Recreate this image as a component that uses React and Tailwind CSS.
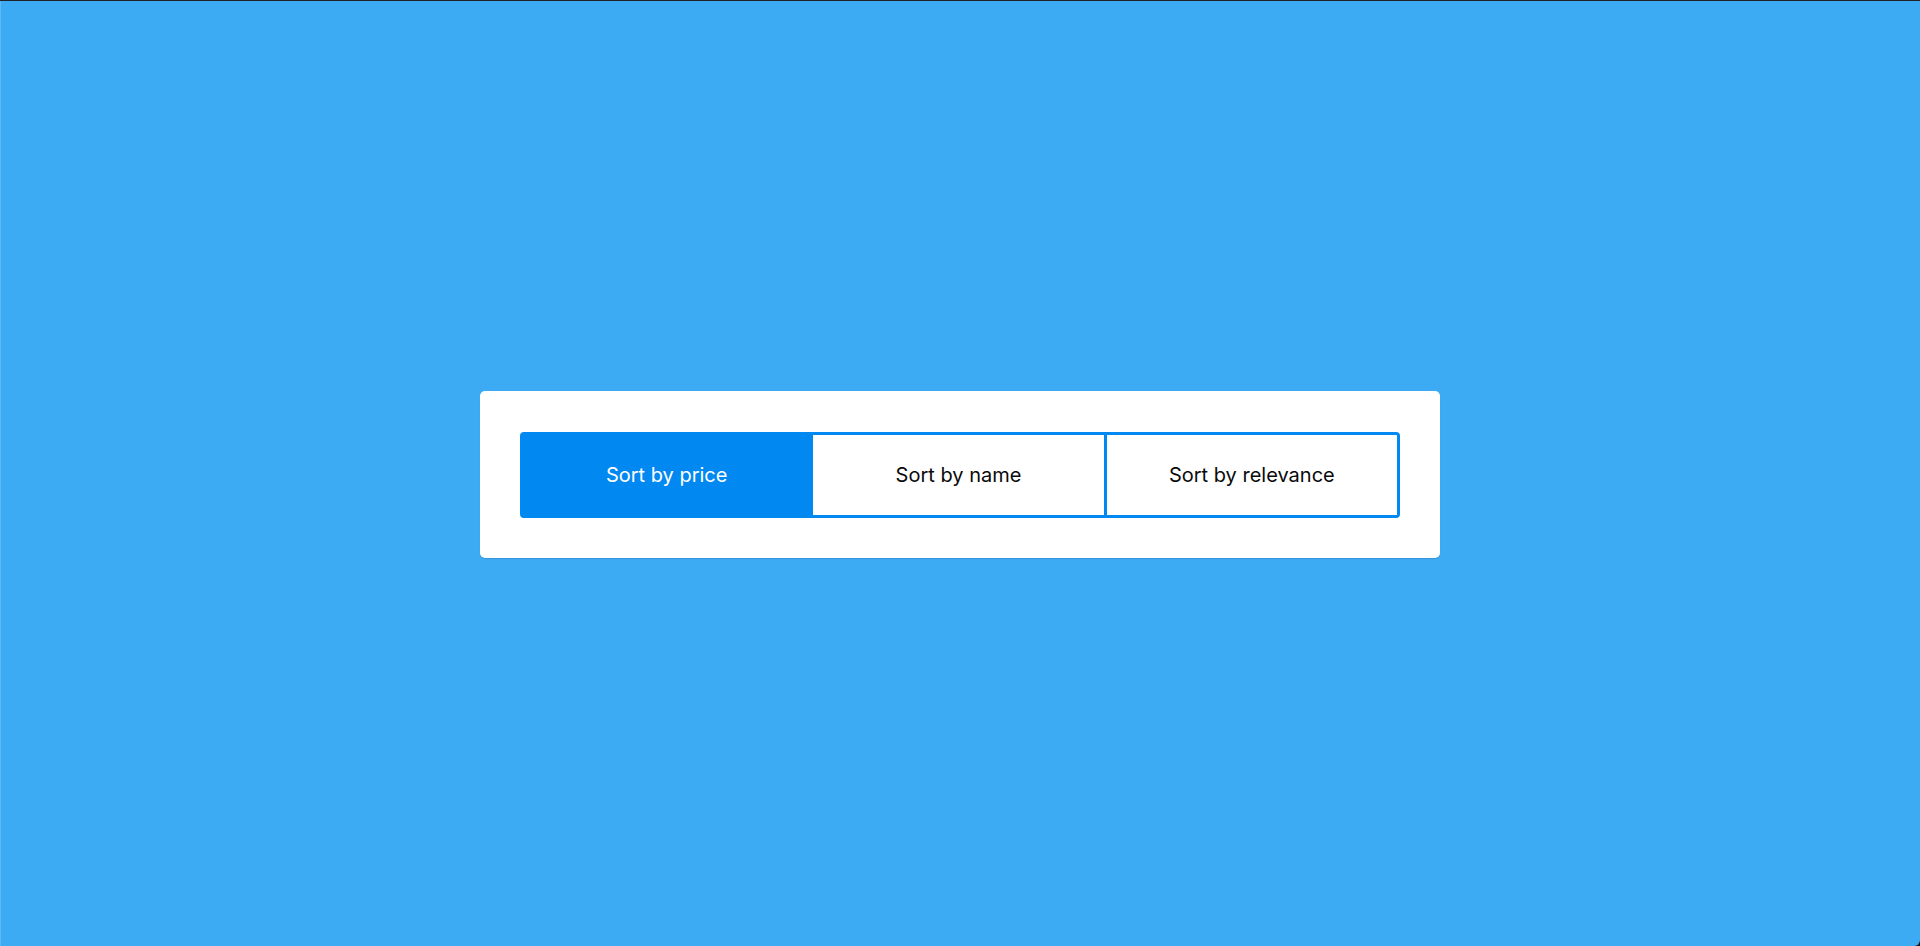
export default function App() {
  const items = ["Sort by price", "Sort by name", "Sort by relevance"];
  return (
    <div className="w-full h-[946px] bg-[#1b1b1b]">
      <div
        className="w-full h-full bg-[#3dabf4] shadow-[inset_0_1px_0_#1f2226,inset_1px_0_0_#5ab8f5] rounded-br-[6px] flex items-center justify-center pt-[2px]"
        style={{ fontFamily: "Inter, 'Noto Sans', sans-serif" }}
      >
        <div className="w-[960px] h-[167px] bg-white rounded-[5px] shadow-[0_1px_1px_rgba(0,0,0,0.12)] px-[40px] pt-[41px] pb-[40px] box-border">
          <div className="grid grid-cols-3 h-[86px] w-[880px]">
            {items.map((t, i) => (
              <button
                key={t}
                className={
                  i === 0
                    ? "bg-[#0288f1] text-white text-[20px] rounded-l-[4px] border-[3px] border-[#0288f1] flex items-center justify-center"
                    : i === 1
                    ? "bg-white text-[#0a0a0a] text-[20px] border-y-[3px] border-r-[3px] border-[#0288f1] flex items-center justify-center"
                    : "bg-white text-[#0a0a0a] text-[20px] rounded-r-[4px] border-y-[3px] border-r-[3px] border-[#0288f1] flex items-center justify-center"
                }
              >
                {t}
              </button>
            ))}
          </div>
        </div>
      </div>
    </div>
  );
}
